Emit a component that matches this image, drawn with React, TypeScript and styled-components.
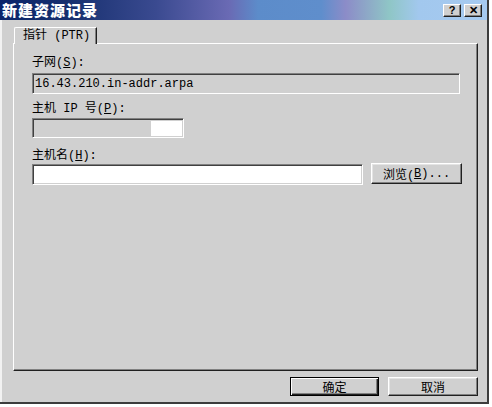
import React from "react";
import styled, { createGlobalStyle } from "styled-components";

const Global = createGlobalStyle`
  html, body { margin: 0; padding: 0; background: #ffffff; }
  body { font-family: "Liberation Mono", "Noto Sans CJK SC", monospace; font-size: 12px; color: #000; }
`;

const FACE = "#d0d0d0";

const Dialog = styled.div`
  width: 487px;
  height: 402px;
  display: flex;
  flex-direction: column;
  background: ${FACE};
  border-right: 2px solid #3c3c3c;
  border-bottom: 2px solid #3c3c3c;
`;

const TitleBar = styled.div`
  height: 20px;
  flex: none;
  display: flex;
  align-items: center;
  padding: 0 5px 0 2px;
  background: linear-gradient(
    90deg,
    #0a246a 0%,
    #17306f 14%,
    #3a4a90 32%,
    #6a6ab4 47%,
    #5c8cca 53%,
    #5f8ecc 66%,
    #8c8cc8 71%,
    #8fc6c6 80%,
    #a2c8ee 86%,
    #a6caf0 100%
  );
`;

const Title = styled.span`
  flex: 1;
  color: #ffffff;
  font-family: "Noto Sans CJK SC", sans-serif;
  font-weight: 900;
  font-size: 15px;
  letter-spacing: 1px;
  line-height: 20px;
`;

const CaptionButtons = styled.div`
  display: flex;
  gap: 3px;
`;

const CaptionButton = styled.div`
  width: 18px;
  height: 13px;
  box-sizing: border-box;
  background: ${FACE};
  border: 1px solid;
  border-color: #ffffff #202020 #202020 #ffffff;
  box-shadow: inset -1px -1px #808080;
  display: flex;
  align-items: center;
  justify-content: center;
  font-family: "Liberation Sans", sans-serif;
  font-weight: 700;
  font-size: 11px;
  line-height: 11px;
  color: #000;
`;

const Body = styled.div`
  flex: 1;
  display: flex;
  flex-direction: column;
  border-left: 2px solid #f2f2f2;
  padding: 7px 9px 0 11px;
`;

const Tabs = styled.div`
  display: flex;
  height: 17px;
  padding-left: 1px;
  position: relative;
  z-index: 1;
  margin-bottom: -1px;
`;

const Tab = styled.div`
  width: 83px;
  height: 17px;
  box-sizing: border-box;
  background: ${FACE};
  border-top: 1px solid #ffffff;
  border-left: 1px solid #ffffff;
  border-right: 1px solid #202020;
  box-shadow: inset -1px 0 #808080;
  border-top-left-radius: 2px;
  padding-left: 8px;
  line-height: 16px;
  font-size: 12px;
  white-space: nowrap;
`;

const Panel = styled.div`
  height: 328px;
  box-sizing: border-box;
  border: 1px solid;
  border-color: #ffffff #202020 #202020 #ffffff;
  box-shadow: inset -1px -1px #808080;
  padding: 12px 0 0 18px;
  display: flex;
  flex-direction: column;
`;

const Label = styled.div<{ $top: number }>`
  margin-top: ${(p) => p.$top}px;
  height: 14px;
  line-height: 14px;
  white-space: nowrap;
`;

const Key = styled.span`
  text-decoration: underline;
`;

const Field = styled.div<{ $w: number; $h?: number; $bg?: string; $top?: number }>`
  width: ${(p) => p.$w}px;
  height: ${(p) => p.$h ?? 21}px;
  margin-top: ${(p) => p.$top ?? 3}px;
  box-sizing: border-box;
  background: ${(p) => p.$bg ?? "#ffffff"};
  border: 1px solid;
  border-color: #808080 #ffffff #ffffff #808080;
  box-shadow: inset 1px 1px #404040, inset -1px -1px ${FACE};
  display: flex;
  align-items: center;
  padding-left: 2px;
  font-size: 12px;
  white-space: nowrap;
  overflow: hidden;
`;

const IpField = styled(Field)`
  justify-content: flex-end;
  padding: 2px 1px 1px 2px;
`;

const IpWhite = styled.div`
  width: 31px;
  height: 100%;
  background: #ffffff;
`;

const Row = styled.div`
  display: flex;
  align-items: flex-start;
  gap: 8px;
`;

const Button = styled.div<{ $w: number; $h: number; $default?: boolean }>`
  width: ${(p) => p.$w}px;
  height: ${(p) => p.$h}px;
  box-sizing: border-box;
  background: ${FACE};
  border: 1px solid;
  border-color: ${(p) => (p.$default ? "#000000" : "#ffffff #202020 #202020 #ffffff")};
  box-shadow: ${(p) =>
    p.$default
      ? "inset 1px 1px #ffffff, inset -1px -1px #202020, inset -2px -2px #808080"
      : "inset -1px -1px #808080, inset 1px 1px #e4e4e4"};
  display: flex;
  align-items: center;
  justify-content: center;
  font-size: 12px;
  white-space: nowrap;
`;

const Footer = styled.div`
  display: flex;
  justify-content: flex-end;
  gap: 9px;
  margin-top: 6px;
`;

export default function App() {
  return (
    <>
      <Global />
      <Dialog>
        <TitleBar>
          <Title>新建资源记录</Title>
          <CaptionButtons>
            <CaptionButton>?</CaptionButton>
            <CaptionButton>✕</CaptionButton>
          </CaptionButtons>
        </TitleBar>
        <Body>
          <Tabs>
            <Tab>指针 (PTR)</Tab>
          </Tabs>
          <Panel>
            <Label $top={0}>
              子网(<Key>S</Key>):
            </Label>
            <Field $w={428} $bg={FACE} $top={3}>
              16.43.210.in-addr.arpa
            </Field>
            <Label $top={8}>
              主机 IP 号(<Key>P</Key>):
            </Label>
            <IpField $w={152} $h={20} $bg={FACE} $top={2}>
              <IpWhite />
            </IpField>
            <Label $top={11}>
              主机名(<Key>H</Key>):
            </Label>
            <Row>
              <Field $w={331} $top={1} />
              <Button $w={91} $h={21}>
                浏览(<Key>B</Key>)...
              </Button>
            </Row>
          </Panel>
          <Footer>
            <Button $w={89} $h={19} $default>
              确定
            </Button>
            <Button $w={90} $h={19}>
              取消
            </Button>
          </Footer>
        </Body>
      </Dialog>
    </>
  );
}
